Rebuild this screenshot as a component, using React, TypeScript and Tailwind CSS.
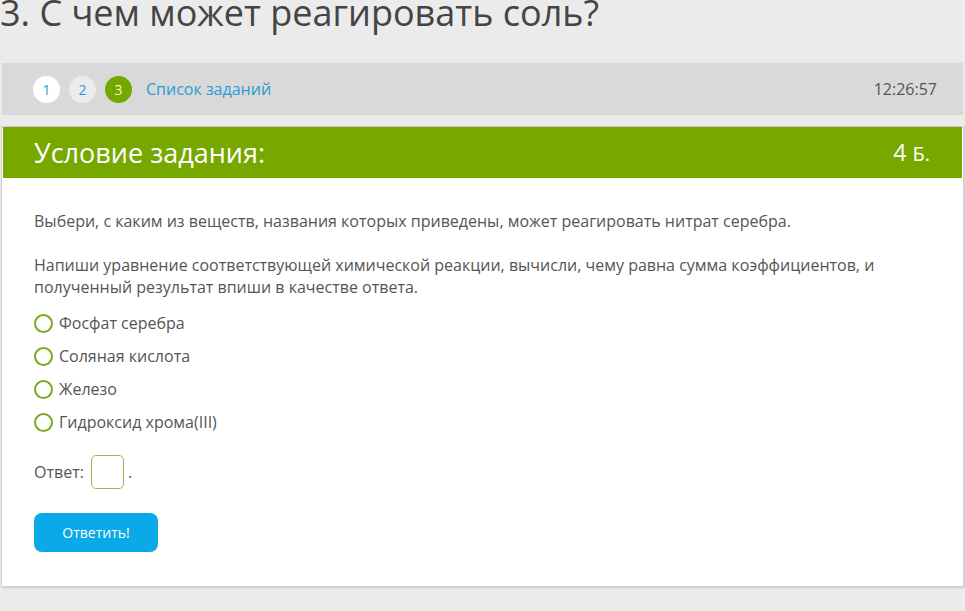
import React from 'react';

const options = ['Фосфат серебра', 'Соляная кислота', 'Железо', 'Гидроксид хрома(III)'];

export default function App() {
  return (
    <div className="min-h-[611px] bg-[#ebebeb] font-['Open_Sans',sans-serif] text-[#555]">
      <h1 className="h-[63px] overflow-hidden text-[36px] leading-[26px] text-[#444]">3. С чем может реагировать соль?</h1>

      <div className="mx-[2px] flex h-[52px] items-center bg-[#d9d9d9] pl-[31px] pr-[26px]">
        <div className="flex items-center gap-[9px]">
          <span className="flex h-[27px] w-[27px] items-center justify-center rounded-full bg-white text-[14px] text-[#2a9bd5]">1</span>
          <span className="flex h-[27px] w-[27px] items-center justify-center rounded-full bg-[#ececec] text-[14px] text-[#2a9bd5]">2</span>
          <span className="flex h-[27px] w-[27px] items-center justify-center rounded-full bg-[#74a700] text-[14px] text-[#f2f7c0]">3</span>
        </div>
        <span className="ml-[14px] text-[16px] text-[#2a9bd5]">Список заданий</span>
        <span className="ml-auto text-[16px] text-[#555]">12:26:57</span>
      </div>

      <div className="mx-[1px] mt-[11px] border border-[#d0d0d0] bg-white shadow-[1px_1px_2px_rgba(0,0,0,0.15)]">
        <div className="mx-[1px] flex h-[51px] items-center bg-[#76a800] pl-[31px] pr-[32px] text-white">
          <span className="text-[27px] leading-none">Условие задания:</span>
          <span className="ml-auto text-[23px] leading-none">4 <span className="text-[20px]">Б.</span></span>
        </div>

        <div className="px-[32px] pb-[34px] pt-[32px] text-[16px] leading-[22px]">
          <p>Выбери, с каким из веществ, названия которых приведены, может реагировать нитрат серебра.</p>
          <p className="mt-[22px] max-w-[850px]">
            Напиши уравнение соответствующей химической реакции, вычисли, чему равна сумма коэффициентов, и
            полученный результат впиши в качестве ответа.
          </p>

          <div className="mt-[14px] flex flex-col gap-[11px]">
            {options.map(o => (
              <label key={o} className="flex items-center gap-[6px]">
                <span className="h-[19px] w-[19px] rounded-full border-2 border-[#7aa81e] bg-white" />
                <span>{o}</span>
              </label>
            ))}
          </div>

          <div className="mt-[22px] flex items-center">
            <span>Ответ:</span>
            <span className="ml-[7px] h-[34px] w-[33px] rounded-[5px] border border-[#9ab84a] bg-white" />
            <span className="ml-[4px]">.</span>
          </div>

          <button className="mt-[24px] block h-[39px] w-[124px] rounded-[8px] bg-[#0aaae8] text-[14px] text-white">Ответить!</button>
        </div>
      </div>
    </div>
  );
}
